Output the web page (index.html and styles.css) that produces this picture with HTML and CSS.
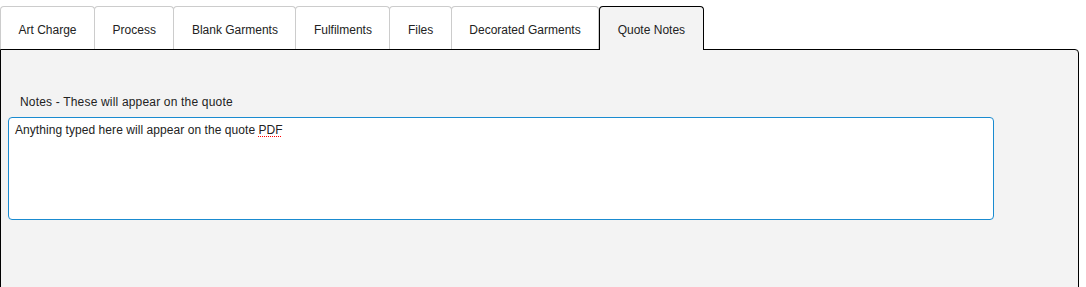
FILE: index.html
```html
<!DOCTYPE html>
<html lang="en">
  <head>
    <meta charset="UTF-8" />
    <meta name="viewport" content="width=device-width, initial-scale=1.0" />
    <title>Quote Notes</title>
    <link rel="stylesheet" href="styles.css">
  </head>
  <body>
    <nav class="tabs">
      <a href="#" class="tab">Art Charge</a>
      <a href="#" class="tab">Process</a>
      <a href="#" class="tab">Blank Garments</a>
      <a href="#" class="tab">Fulfilments</a>
      <a href="#" class="tab">Files</a>
      <a href="#" class="tab">Decorated Garments</a>
      <a href="#" class="tab active">Quote Notes</a>
    </nav>
    <main class="panel">
      <label class="notesLabel" for="quoteNotes">Notes - These will appear on the quote</label>
      <div id="quoteNotes" class="notesBox" contenteditable="true">Anything typed here will appear on the quote <span class="misspelt">PDF</span></div>
    </main>
  </body>
</html>
```

FILE: styles.css
```css
body {
  margin: 0;
  padding: 0;
  font-family: "Liberation Sans", Arial, sans-serif;
  font-size: 12px;
  color: #222;
  background: #fff;
  height: 100vh;
  overflow: hidden;
}

.tabs {
  display: flex;
  padding-top: 6px;
}

.tab {
  display: block;
  padding: 16px 17.5px 12px;
  line-height: 14px;
  color: #222;
  text-decoration: none;
  background-color: #fff;
  border: 1px solid #ccc;
  border-bottom: none;
  border-radius: 4px 4px 0 0;
  margin-left: -1px;
}
.tab:first-child {
  margin-left: 0;
}

.active {
  position: relative;
  z-index: 1;
  background-color: #f3f3f3;
  border-color: #000;
  margin-left: 0;
  margin-bottom: -1px;
  padding-bottom: 13px;
}

.panel {
  display: flex;
  flex-direction: column;
  align-items: flex-start;
  height: 260px;
  margin-right: 7px;
  padding: 45px 7px 0;
  background-color: #f3f3f3;
  border: 1px solid #000;
  border-radius: 0 4px 0 0;
}

.notesLabel {
  margin-left: 12px;
  line-height: 14px;
  letter-spacing: 0.18px;
}

.notesBox {
  box-sizing: border-box;
  width: 986px;
  height: 103px;
  margin-top: 8px;
  padding: 5px 6px;
  line-height: 14px;
  letter-spacing: 0.06px;
  background-color: #fff;
  border: 1px solid #1a8bd0;
  border-radius: 4px;
  outline: none;
}

.misspelt {
  text-decoration-line: underline;
  text-decoration-style: dotted;
  text-decoration-color: #f00;
  text-decoration-thickness: 1px;
  text-underline-offset: 2px;
}
```
